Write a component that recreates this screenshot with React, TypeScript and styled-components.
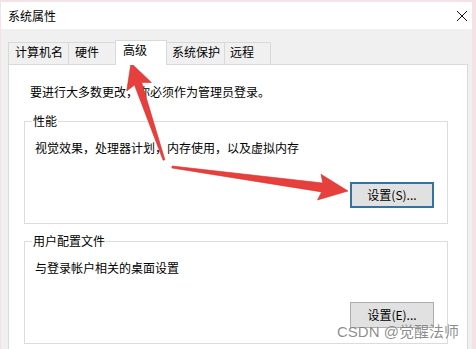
import React from "react";
import styled, { createGlobalStyle } from "styled-components";

const GlobalStyle = createGlobalStyle`
  html, body {
    margin: 0;
    padding: 0;
    width: 476px;
    height: 349px;
    overflow: hidden;
    background: #f5e2e5;
  }
  body {
    font-family: "Noto Sans CJK SC", "Noto Sans", sans-serif;
    font-size: 12px;
    color: #000;
  }
`;

const Screen = styled.div`
  position: relative;
  width: 476px;
  height: 349px;
  box-sizing: border-box;
  padding: 2px 4px 0 1px;
  overflow: hidden;
`;

const Window = styled.div`
  background: #f0f0f0;
  height: 370px;
  display: flex;
  flex-direction: column;
`;

const TitleBar = styled.div`
  height: 27px;
  flex-shrink: 0;
  background: #fff;
  display: flex;
  align-items: center;
  justify-content: space-between;
  padding: 0 4px 0 7px;
  line-height: 16px;
`;

const Title = styled.span`
  font-size: 12px;
  color: #000;
`;

const Body = styled.div`
  flex: 1;
  display: flex;
  flex-direction: column;
  padding: 11px 4px 0 7px;
`;

const TabRow = styled.div`
  display: flex;
  align-items: flex-start;
  height: 25px;
  margin-bottom: -1px;
  position: relative;
  z-index: 1;
`;

const Tab = styled.div<{ $w: number; $ml: number; $pl: number; $active?: boolean }>`
  box-sizing: border-box;
  width: ${(p) => p.$w}px;
  margin-left: ${(p) => p.$ml}px;
  padding-left: ${(p) => p.$pl}px;
  padding-top: 1px;
  line-height: 16px;
  border: 1px solid #d9d9d9;
  border-bottom: none;
  white-space: nowrap;
  background: ${(p) => (p.$active ? "#fff" : "#f0f0f0")};
  height: ${(p) => (p.$active ? 25 : 22)}px;
  margin-top: ${(p) => (p.$active ? 0 : 2)}px;
  position: ${(p) => (p.$active ? "relative" : "static")};
  z-index: ${(p) => (p.$active ? 2 : "auto")};
`;

const Panel = styled.div`
  flex: 1;
  background: #fff;
  border: 1px solid #d9d9d9;
  padding: 19px 19px 0 15px;
  display: flex;
  flex-direction: column;
`;

const Intro = styled.div`
  margin: 0 0 13px 6px;
  line-height: 16px;
`;

const Group = styled.fieldset<{ $mt?: number }>`
  margin: ${(p) => p.$mt ?? 0}px 0 0 0;
  min-width: 0;
  border: 1px solid #dcdcdc;
  padding: 0 13px 15px 10px;
  display: flex;
  flex-direction: column;
`;

const Legend = styled.legend`
  margin-left: -3px;
  padding: 0 1px;
  line-height: 16px;
`;

const GroupText = styled.div`
  margin-top: 11px;
  line-height: 16px;
`;

const Button = styled.button<{ $default?: boolean }>`
  align-self: flex-end;
  margin-top: 26px;
  width: 84px;
  height: 26px;
  box-sizing: border-box;
  background: #e1e1e1;
  border: ${(p) => (p.$default ? "2px solid #34729f" : "1px solid #adadad")};
  font-family: "Noto Sans CJK SC", "Noto Sans", sans-serif;
  font-size: 12px;
  color: #000;
  padding: 0;
  line-height: 16px;
`;

const Watermark = styled.div`
  position: absolute;
  left: 337px;
  top: 323px;
  font-family: "Liberation Sans", "Noto Sans CJK SC", sans-serif;
  font-size: 15px;
  line-height: 18px;
  color: rgba(95, 95, 95, 0.72);
  white-space: nowrap;
  text-shadow: 0 0 1px rgba(255, 255, 255, 0.8);
`;

const Overlay = styled.svg`
  position: absolute;
  left: 0;
  top: 0;
  pointer-events: none;
`;

function arrowPoints(
  tx: number,
  ty: number,
  px: number,
  py: number,
  headLen: number,
  headHalf: number,
  neckHalf: number,
  tailHalf: number
): string {
  const dx = px - tx;
  const dy = py - ty;
  const L = Math.hypot(dx, dy);
  const ux = dx / L;
  const uy = dy / L;
  const nx = -uy;
  const ny = ux;
  const kx = px - ux * headLen;
  const ky = py - uy * headLen;
  const bx = kx - ux * 3;
  const by = ky - uy * 3;
  const pts: [number, number][] = [
    [tx + nx * tailHalf, ty + ny * tailHalf],
    [kx + nx * neckHalf, ky + ny * neckHalf],
    [bx + nx * headHalf, by + ny * headHalf],
    [px, py],
    [bx - nx * headHalf, by - ny * headHalf],
    [kx - nx * neckHalf, ky - ny * neckHalf],
    [tx - nx * tailHalf, ty - ny * tailHalf],
  ];
  return pts.map(([x, y]) => `${x.toFixed(1)},${y.toFixed(1)}`).join(" ");
}

const tabs = [
  { label: "计算机名", w: 61, ml: 0, pl: 6 },
  { label: "硬件", w: 50, ml: -1, pl: 6 },
  { label: "高级", w: 52, ml: -3, pl: 7, active: true },
  { label: "系统保护", w: 61, ml: -3, pl: 7 },
  { label: "远程", w: 47, ml: -1, pl: 5 },
];

export default function App() {
  return (
    <>
      <GlobalStyle />
      <Screen>
        <Window>
          <TitleBar>
            <Title>系统属性</Title>
            <svg width="12" height="12" viewBox="0 0 12 12">
              <path d="M1 1 L11 11 M11 1 L1 11" stroke="#111" strokeWidth="1" fill="none" />
            </svg>
          </TitleBar>
          <Body>
            <TabRow>
              {tabs.map((t) => (
                <Tab key={t.label} $w={t.w} $ml={t.ml} $pl={t.pl} $active={t.active}>
                  {t.label}
                </Tab>
              ))}
            </TabRow>
            <Panel>
              <Intro>要进行大多数更改，你必须作为管理员登录。</Intro>
              <Group>
                <Legend>性能</Legend>
                <GroupText>视觉效果，处理器计划，内存使用，以及虚拟内存</GroupText>
                <Button $default>设置(S)...</Button>
              </Group>
              <Group $mt={9}>
                <Legend>用户配置文件</Legend>
                <GroupText>与登录帐户相关的桌面设置</GroupText>
                <Button>设置(E)...</Button>
              </Group>
            </Panel>
          </Body>
        </Window>
        <Watermark>CSDN @觉醒法师</Watermark>
        <Overlay width="476" height="349" viewBox="0 0 476 349">
          <polygon
            points={arrowPoints(164, 160, 131, 63, 22, 13, 3.8, 1)}
            fill="#e63f3c"
            stroke="#d23430"
            strokeWidth="0.6"
            strokeLinejoin="round"
          />
          <polygon
            points={arrowPoints(172, 167, 348, 191, 26, 13, 4.5, 1)}
            fill="#e63f3c"
            stroke="#d23430"
            strokeWidth="0.6"
            strokeLinejoin="round"
          />
        </Overlay>
      </Screen>
    </>
  );
}
